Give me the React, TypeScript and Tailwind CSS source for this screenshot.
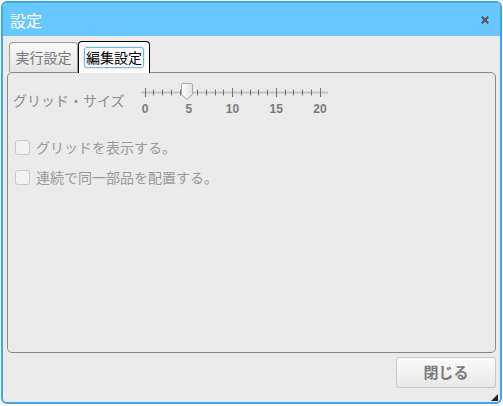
import React from 'react';

const jp = "font-['Noto_Sans_CJK_JP','Noto_Sans',sans-serif]";

const ticks = Array.from({ length: 21 }, (_, i) => i);
const labels = ['0', '5', '10', '15', '20'];

const GridSlider: React.FC = () => {
  return (
    <div className="flex flex-col w-[195px]">
      <svg width="195" height="20" viewBox="0 0 195 20">
        <line x1="6" y1="10.5" x2="193" y2="10.5" stroke="#c4c4c4" strokeWidth="2" />
        {ticks.map((i) => {
          const x = Math.round(9.5 + 8.75 * i) + 0.5;
          const major = i % 5 === 0;
          return (
            <line
              key={i}
              x1={x}
              x2={x}
              y1={major ? 6 : 7.5}
              y2={major ? 15 : 13.5}
              stroke="#707070"
              strokeWidth="1"
            />
          );
        })}
        <defs>
          <linearGradient id="thumb" x1="0" y1="0" x2="1" y2="0">
            <stop offset="0" stopColor="#ffffff" />
            <stop offset="1" stopColor="#e2e2e2" />
          </linearGradient>
        </defs>
        <path
          d="M46.5 2.5 Q46.5 1.5 47.5 1.5 L56.5 1.5 Q57.5 1.5 57.5 2.5 L57.5 12.5 L52 17.5 L46.5 12.5 Z"
          fill="url(#thumb)"
          stroke="#a8a8a8"
          strokeWidth="1"
        />
      </svg>
      <div className="flex gap-[23.75px] ml-0">
        {labels.map((l) => (
          <span
            key={l}
            className="w-[20px] text-center text-[12px] leading-[14px] font-bold text-[#7a7a7a] font-['Liberation_Sans',sans-serif]"
          >
            {l}
          </span>
        ))}
      </div>
    </div>
  );
};

const Check: React.FC<{ label: string }> = ({ label }) => (
  <label className="flex items-center h-[20px] ml-[7px]">
    <span className="w-[15px] h-[15px] rounded-[3px] border border-[#c9c9c9] bg-[#f2f2f2]"></span>
    <span className={`ml-[6px] text-[14px] leading-[20px] text-[#999999] ${jp}`}>{label}</span>
  </label>
);

const App: React.FC = () => {
  return (
    <div className="w-[503px] h-[406px] bg-white p-px">
      <div className="relative w-[501px] h-[403px] border-2 border-[#3aa8f4] rounded-[6px] overflow-hidden flex flex-col bg-[#ebebeb]">
        <div className="h-[33px] bg-[#66c8ff] flex items-center justify-between pl-[7px] pr-[11px]">
          <div className={`text-white text-[16px] leading-[20px] ${jp}`}>設定</div>
          <svg width="8" height="8" viewBox="0 0 8 8">
            <path d="M0.8 0.8 L7.2 7.2 M7.2 0.8 L0.8 7.2" stroke="#555555" strokeWidth="2.2" />
          </svg>
        </div>

        <div className="flex flex-col px-[4px] pt-[5px]">
          <div className="flex items-end ml-[2px] relative z-10">
            <div
              className={`w-[69px] h-[30px] mb-px flex items-center justify-center border border-b-0 border-[#9a9a9a] rounded-t-[4px] bg-gradient-to-b from-[#fafafa] to-[#e4e4e4] text-[14px] text-[#777777] ${jp}`}
            >
              実行設定
            </div>
            <div
              className={`w-[72px] h-[32px] -mb-0 flex items-center justify-center border border-b-0 border-black rounded-t-[4px] bg-white text-[14px] text-black ${jp}`}
            >
              <span className="px-[1px] leading-[19px] rounded-[3px] border border-[#6ab7f2] shadow-[0_0_2px_#8cc8f5]">
                編集設定
              </span>
            </div>
          </div>

          <div className="h-[281px] -mt-px border border-[#888888] rounded-[5px] bg-[#ebebeb] pt-[9px]">
            <div className="flex items-start">
              <div className={`w-[127px] pl-[5px] mt-[8px] text-[14px] leading-[20px] text-[#8c8c8c] ${jp}`}>
                グリッド・サイズ
              </div>
              <GridSlider />
            </div>
            <div className="mt-[21px] flex flex-col gap-[10px]">
              <Check label="グリッドを表示する。" />
              <Check label="連続で同一部品を配置する。" />
            </div>
          </div>

          <div className="flex justify-end mt-[4px]">
            <button
              className={`w-[100px] h-[31px] border border-[#c8c8c8] rounded-[3px] bg-gradient-to-b from-[#fbfbfb] to-[#e9e9e9] text-[15px] font-bold text-[#7a7a7a] ${jp}`}
            >
              閉じる
            </button>
          </div>
        </div>

        <svg className="absolute right-[2px] bottom-[1px]" width="8" height="8" viewBox="0 0 8 8">
          <path d="M8 1 L8 8 L1 8 Z" fill="#222222" />
        </svg>
      </div>
    </div>
  );
};

export default App;
